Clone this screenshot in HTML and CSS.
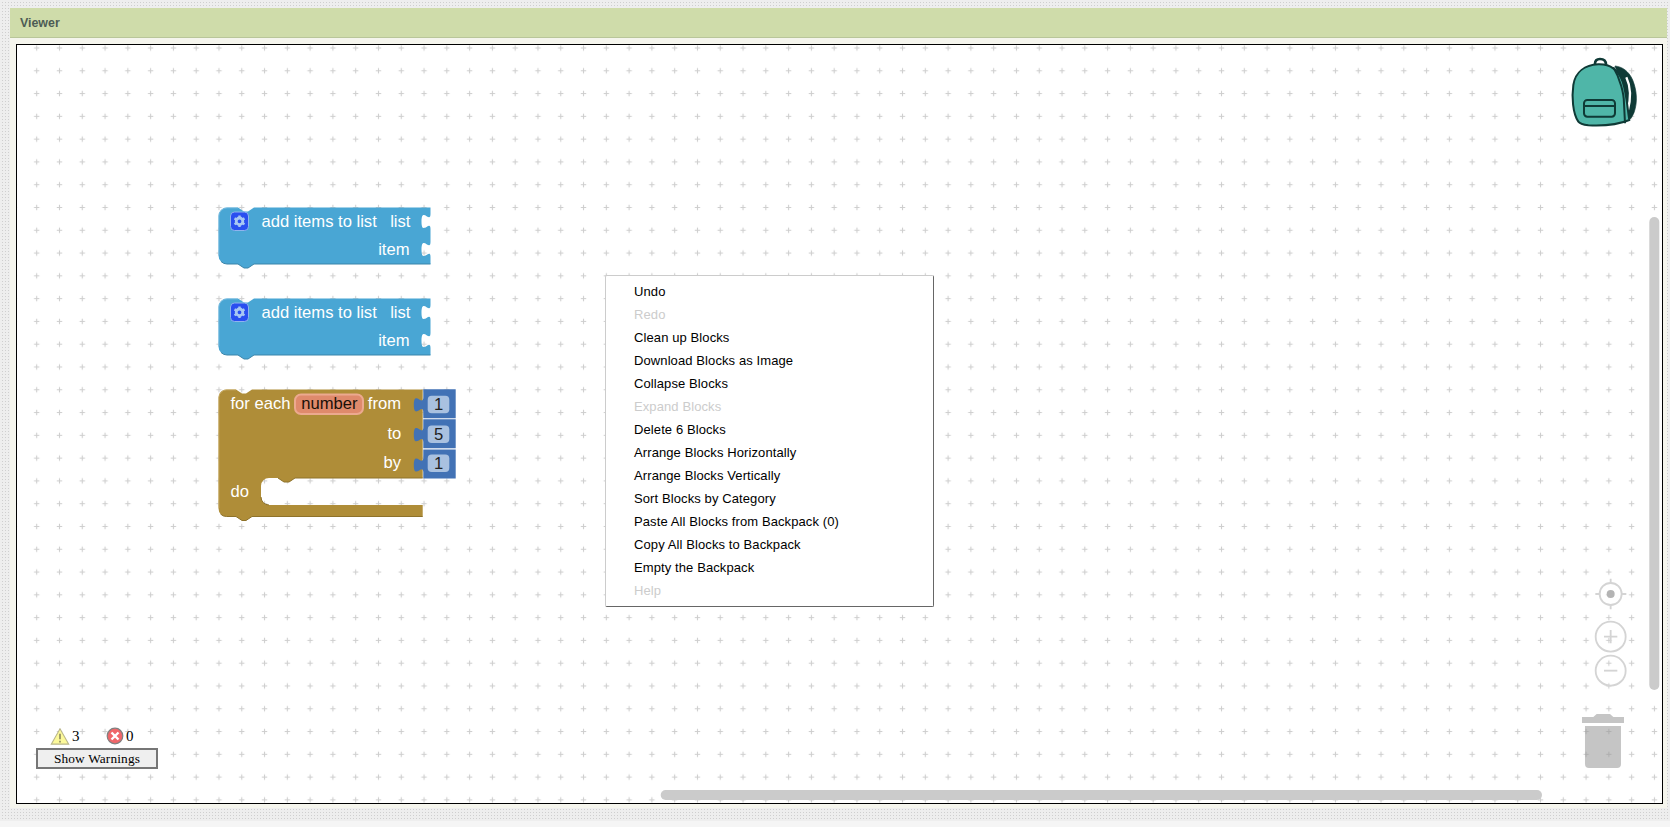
FILE: index.html
```html
<!DOCTYPE html>
<html lang="en">
<head>
<meta charset="utf-8">
<title>Viewer</title>
<link rel="stylesheet" href="styles.css">
</head>
<body>
<main class="page">
  <section class="panel">
    <header class="panel-header">Viewer</header>
    <div class="panel-body">
      <div class="workspace">
        <svg class="canvas" viewBox="17 45 1645 758">
          <defs>
            <pattern id="grid" patternUnits="userSpaceOnUse" x="25.3" y="36.6" width="22.785" height="22.785">
              <path class="grid-plus" d="M8.700 11.400h5.400M11.400 8.700v5.400"/>
            </pattern>
            <g id="mutator">
              <rect class="mut-box" x="230.500" y="212" width="18" height="18.500" rx="4"/>
              <circle class="mut-gear" cx="239.500" cy="221.300" r="3.300"/>
              <path class="mut-teeth" d="M239.500 215.600v2.400M239.500 224.600v2.400M234.500 218.400l2.100 1.200M242.400 223l2.100 1.200M234.500 224.200l2.100-1.200M242.400 219.600l2.100-1.200"/>
            </g>
            <g id="add-block">
              <path class="blue-block" d="M218.500 216a8.500 8.500 0 0 1 8.500-8.500H238l6 4h4l6-4H430.500V214c0 10-9-8-9 7.500s9-2.500 9 7.500V242c0 10-9-8-9 7.500s9-2.500 9 7.500V264H254l-6 4h-4l-6-4H227a8.500 8.500 0 0 1-8.500-8.500Z"/>
              <path class="blue-shade" d="M430.500 264H254l-6 4h-4l-6-4H227a8.500 8.500 0 0 1-6-2.500"/>
              <path class="blue-light" d="M218.800 255V216a8.500 8.500 0 0 1 8.500-8.200H238"/>
              <use href="#mutator"/>
              <text class="block-text" x="261.500" y="227.300">add items to list</text>
              <text class="block-text" x="390.200" y="227.300">list</text>
              <text class="block-text" x="378.200" y="255.300">item</text>
            </g>
            <g id="num-block">
              <path class="num-block" d="M423.300 0H455.700V29H423.300V23c0-10-9.500 8-9.500-7.500s9.500 2.500 9.500-7.500Z"/>
            </g>
          </defs>
          <rect x="17" y="45" width="1645" height="758" fill="url(#grid)"/>

          <use href="#add-block"/>
          <use href="#add-block" y="91"/>

          <path class="gold-block" d="M218.500 397.500a8 8 0 0 1 8-8H236l6 4h4l6-4H422.700V478H295l-6 4h-5l-6-4H269a8 8 0 0 0-8 8V497a8 8 0 0 0 8 8H422.700V516.500H252l-6 4h-4l-6-4H226.500a8 8 0 0 1-8-8Z"/>
          <path class="gold-shade" d="M422.700 478H295l-6 4h-5l-6-4M261 497a8 8 0 0 0 8 8M422.700 516.500H252l-6 4h-4l-6-4H226.500a8 8 0 0 1-6-2.500"/>
          <path class="gold-light" d="M218.800 508V397.500a8 8 0 0 1 8-7.700H236"/>
          <text class="block-text" x="230.500" y="409">for each</text>
          <rect class="var-pill" x="295" y="394.500" width="68" height="19.500" rx="6"/>
          <text class="var-text" x="301.200" y="409">number</text>
          <text class="block-text" x="367.800" y="409">from</text>
          <text class="block-text" x="387.500" y="438.500">to</text>
          <text class="block-text" x="383.500" y="467.500">by</text>
          <text class="block-text" x="230.500" y="496.700">do</text>

          <use href="#num-block" y="389.300"/>
          <use href="#num-block" y="419.200"/>
          <use href="#num-block" y="449.500"/>
          <rect class="num-pill" x="427.700" y="395.700" width="21.600" height="17.500" rx="4"/>
          <text class="num-text" x="438.500" y="410">1</text>
          <rect class="num-pill" x="427.700" y="425.500" width="21.600" height="17.500" rx="4"/>
          <text class="num-text" x="438.500" y="439.800">5</text>
          <rect class="num-pill" x="427.700" y="454.500" width="21.600" height="17.500" rx="4"/>
          <text class="num-text" x="438.500" y="468.800">1</text>

          <g transform="translate(1550 40) scale(.3333)">
            <path class="pack-strap" d="M195 78C215 80 236 92 248 120 260 150 264 185 252 218 246 232 240 240 232 242L210 120Z"/>
            <path class="pack-gap" d="M229 112C240 135 246 165 233 214"/>
            <path class="pack-handle" d="M135 72C135 60 142 57 150 57 160 57 168 62 168 74"/>
            <path class="pack-body" d="M85 245C68 220 65 170 70 135 76 95 105 75 145 73 180 72 205 90 218 125 230 160 232 205 238 240 205 254 155 258 115 256 100 254 90 252 85 245Z"/>
            <path class="pack-line" d="M190 82C210 115 222 160 222 190L225 250"/>
            <rect class="pack-line" x="102" y="180" width="93" height="50" rx="10"/>
            <path class="pack-line" d="M102 198H195"/>
          </g>

          <g transform="translate(1570 570) scale(.3333)" class="controls">
            <circle cx="122" cy="72" r="33"/>
            <path d="M122 26V39M122 105V118M76 72H89M155 72H169"/>
            <circle class="ctl-dot" cx="122" cy="72" r="12"/>
            <circle cx="122" cy="200" r="45"/>
            <path d="M102 200H142M122 180V220"/>
            <circle cx="122" cy="302" r="45"/>
            <path d="M102 302H142"/>
          </g>

          <g transform="translate(1570 700) scale(.3333)" class="trash">
            <path d="M36 51H70L80 42H120L130 51H162V69H36Z"/>
            <path d="M45 78H153V192a12 12 0 0 1-12 12H57a12 12 0 0 1-12-12Z"/>
          </g>

          <rect class="scroll" x="1649.300" y="217" width="10" height="473" rx="5"/>
          <rect class="scroll" x="660.700" y="790" width="881.300" height="10" rx="5"/>
        </svg>

        <ul class="menu">
          <li>Undo</li>
          <li class="off">Redo</li>
          <li>Clean up Blocks</li>
          <li>Download Blocks as Image</li>
          <li>Collapse Blocks</li>
          <li class="off">Expand Blocks</li>
          <li>Delete 6 Blocks</li>
          <li>Arrange Blocks Horizontally</li>
          <li>Arrange Blocks Vertically</li>
          <li>Sort Blocks by Category</li>
          <li>Paste All Blocks from Backpack (0)</li>
          <li>Copy All Blocks to Backpack</li>
          <li>Empty the Backpack</li>
          <li class="off">Help</li>
        </ul>

        <div class="warnings">
          <div class="warn-row">
            <div class="warn-item warn-first">
              <svg class="warn-icon" viewBox="0 0 18 16"><path class="tri" d="M9 .8 17.200 15.200H.8Z"/><path class="tri-mark" d="M9 5.500V10.500M9 12V13.600"/></svg>
              <span>3</span>
            </div>
            <div class="warn-item">
              <svg class="warn-icon err" viewBox="0 0 18 18"><circle class="err-c" cx="9" cy="9" r="7.800"/><path class="err-x" d="M5.500 5.500 12.500 12.500M12.500 5.500 5.500 12.500"/></svg>
              <span>0</span>
            </div>
          </div>
          <button class="warn-btn" type="button">Show Warnings</button>
        </div>
      </div>
    </div>
  </section>
</main>
<div class="footer-strip"></div>
</body>
</html>
```

FILE: styles.css
```css
* { box-sizing: border-box; }
html, body { height: 100%; }
body {
  margin: 0;
  display: flex;
  flex-direction: column;
  overflow: hidden;
  background: #f5f5f5;
  font-family: "Liberation Sans", Arial, sans-serif;
}
.page {
  flex: 1;
  min-height: 0;
  display: flex;
  padding: 8px 3px 13px 10px;
  background-color: #cfcfcf;
  background-image:
    linear-gradient(90deg, #eeeeee 2px, transparent 2px),
    linear-gradient(#eeeeee 2px, transparent 2px);
  background-size: 3px 3px;
}
.footer-strip { height: 6px; background: #f5f5f5; }
.panel {
  flex: 1;
  display: flex;
  flex-direction: column;
  background: #f5f5ed;
}
.panel-header {
  height: 30px;
  padding: 0 10px;
  display: flex;
  align-items: center;
  background: #cfdcaa;
  border-bottom: 1px solid #b9c69a;
  color: #4d5c55;
  font-size: 12.400px;
  font-weight: 700;
}
.panel-body {
  flex: 1;
  min-height: 0;
  display: flex;
  padding: 6px 4px 4px 6px;
}
.workspace {
  position: relative;
  flex: 1;
  border: 1px solid #000;
  background: #fff;
}
.canvas { display: block; width: 100%; height: 100%; }
.grid-plus { stroke: #cecece; stroke-width: 1.100; fill: none; }

.blue-block { fill: #49a6d4; }
.blue-shade { fill: none; stroke: #3a85aa; stroke-width: 1; }
.blue-light { fill: none; stroke: #86c2e2; stroke-width: .8; }
.gold-block { fill: #af8d38; }
.gold-shade { fill: none; stroke: #8e722a; stroke-width: 1; }
.gold-light { fill: none; stroke: #cdb272; stroke-width: .8; }
.num-block { fill: #4272b5; }
.block-text {
  fill: #fff;
  font-family: "Liberation Sans", Arial, sans-serif;
  font-size: 16.600px;
}
.var-pill { fill: #df8a6c; stroke: #eca98f; stroke-width: 2; }
.var-text { fill: #1a1008; font-family: "Liberation Sans", Arial, sans-serif; font-size: 16.600px; }
.num-pill { fill: #a9c1e0; }
.num-text { fill: #222; font-family: "Liberation Sans", Arial, sans-serif; font-size: 16.600px; text-anchor: middle; }
.mut-box { fill: #2a4ff0; stroke: #8fb4ee; stroke-width: 1; }
.mut-gear { fill: none; stroke: #a9c8f2; stroke-width: 2.800; }
.mut-teeth { stroke: #a9c8f2; stroke-width: 2.400; fill: none; }

.pack-body { fill: #4fb6a8; stroke: #0f3a36; stroke-width: 6; }
.pack-strap { fill: #0f3a36; stroke: #0f3a36; stroke-width: 2; }
.pack-gap { fill: none; stroke: #fff; stroke-width: 7; }
.pack-handle { fill: none; stroke: #0f3a36; stroke-width: 8; }
.pack-line { fill: none; stroke: #0f3a36; stroke-width: 6; }

.controls { fill: none; stroke: #d4d4d4; stroke-width: 5.500; }
.controls .ctl-dot { fill: #b4b4b4; stroke: none; }
.trash { fill: rgba(150, 150, 150, .55); }
.scroll { fill: #cbcbcb; }

.menu {
  position: absolute;
  left: 588px;
  top: 230px;
  width: 329px;
  margin: 0;
  padding: 4px 0;
  list-style: none;
  background: #fff;
  border: 1px solid #ccc;
  border-right-color: #666;
  border-bottom-color: #666;
  border-radius: 2px;
  color: #000;
  font-size: 13px;
}
.menu li {
  height: 23px;
  line-height: 23px;
  padding-left: 28px;
  white-space: nowrap;
  letter-spacing: .1px;
}
.menu .off { color: #ccc; }

.warnings {
  position: absolute;
  left: 19px;
  top: 681px;
  width: 122px;
  font-family: "Liberation Serif", "Times New Roman", serif;
}
.warn-row {
  display: flex;
  height: 20px;
  margin-bottom: 2px;
  align-items: center;
  padding-left: 14px;
  color: #000;
  font-size: 15px;
}
.warn-item { display: flex; align-items: center; gap: 2px; }
.warn-first { width: 56px; }
.warn-icon { width: 20px; height: 17px; display: block; }
.warn-icon.err { width: 18px; height: 18px; }
.tri { fill: #fcf99a; stroke: #b9b68a; stroke-width: 1; }
.tri-mark { stroke: #8a8760; stroke-width: 1.500; fill: none; }
.err-c { fill: #f0676a; stroke: #808080; stroke-width: 1.200; }
.err-x { stroke: #fff; stroke-width: 2.400; fill: none; }
.warn-btn {
  display: block;
  width: 122px;
  height: 21px;
  padding: 0;
  background: #efefef;
  border: 2px solid #767676;
  border-radius: 0;
  color: #000;
  font-family: "Liberation Serif", "Times New Roman", serif;
  font-size: 13.333px;
  letter-spacing: .15px;
}
```
